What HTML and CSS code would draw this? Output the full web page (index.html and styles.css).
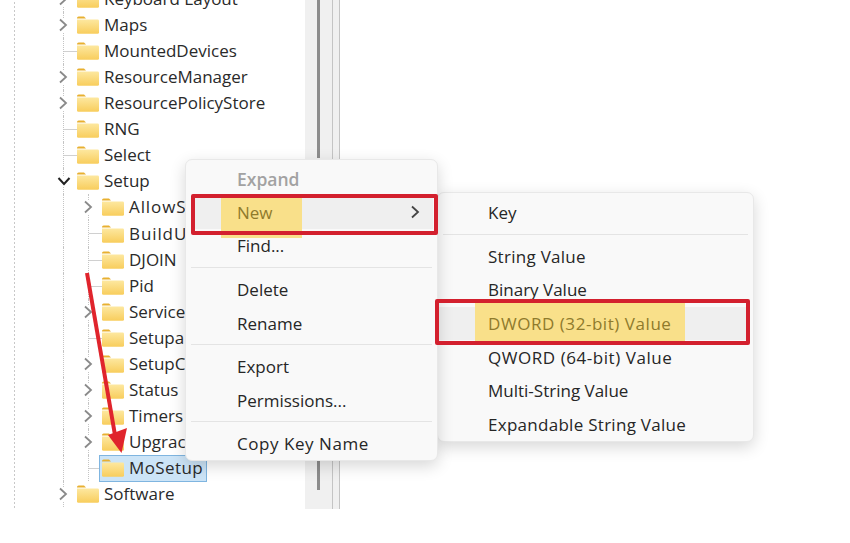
FILE: index.html
```html
<!DOCTYPE html>
<html lang="en">
<head>
    <meta charset="UTF-8">
    <title>Registry Editor context menu</title>
    <link rel="stylesheet" href="styles.css">
</head>
<body>
    <svg width="0" height="0" class="defs">
        <symbol id="folder" viewBox="0 0 22 18">
            <path d="M0 2.2Q0 .6 1.6 .6H7L9 2.6H0Z" fill="#e8b030"/>
            <path d="M0 3.4H20.6Q22 3.4 22 4.8V16.4Q22 17.8 20.6 17.8H1.4Q0 17.8 0 16.4Z" fill="url(#fold)"/>
        </symbol>
        <defs>
            <linearGradient id="fold" x1="0" y1="0" x2="0" y2="1">
                <stop offset="0" stop-color="#fde8a0"/>
                <stop offset="1" stop-color="#f8cd5c"/>
            </linearGradient>
        </defs>
        <symbol id="chev-right" viewBox="0 0 10 14">
            <path d="M2 1.5 8 7 2 12.5" fill="none" stroke="currentColor" stroke-width="1.8"/>
        </symbol>
        <symbol id="chev-down" viewBox="0 0 14 10">
            <path d="M1.5 2 7 8 12.5 2" fill="none" stroke="currentColor" stroke-width="2"/>
        </symbol>
    </svg>

    <div class="panel">
        <div class="tree">
            <div class="row"><svg class="chev"><use href="#chev-right"/></svg><svg class="folder"><use href="#folder"/></svg><span>Keyboard Layout</span></div>
            <div class="row"><svg class="chev"><use href="#chev-right"/></svg><svg class="folder"><use href="#folder"/></svg><span>Maps</span></div>
            <div class="row"><i class="tick"></i><svg class="folder"><use href="#folder"/></svg><span>MountedDevices</span></div>
            <div class="row"><svg class="chev"><use href="#chev-right"/></svg><svg class="folder"><use href="#folder"/></svg><span>ResourceManager</span></div>
            <div class="row"><svg class="chev"><use href="#chev-right"/></svg><svg class="folder"><use href="#folder"/></svg><span>ResourcePolicyStore</span></div>
            <div class="row"><i class="tick"></i><svg class="folder"><use href="#folder"/></svg><span>RNG</span></div>
            <div class="row"><i class="tick"></i><svg class="folder"><use href="#folder"/></svg><span>Select</span></div>
            <div class="row"><svg class="chev-open"><use href="#chev-down"/></svg><svg class="folder"><use href="#folder"/></svg><span>Setup</span></div>
            <div class="row sub"><svg class="chev"><use href="#chev-right"/></svg><svg class="folder"><use href="#folder"/></svg><span class="stretch">AllowS</span></div>
            <div class="row sub"><i class="tick"></i><svg class="folder"><use href="#folder"/></svg><span class="stretch">BuildU</span></div>
            <div class="row sub"><i class="tick"></i><svg class="folder"><use href="#folder"/></svg><span>DJOIN</span></div>
            <div class="row sub"><i class="tick"></i><svg class="folder"><use href="#folder"/></svg><span>Pid</span></div>
            <div class="row sub"><svg class="chev"><use href="#chev-right"/></svg><svg class="folder"><use href="#folder"/></svg><span>Service</span></div>
            <div class="row sub"><i class="tick"></i><svg class="folder"><use href="#folder"/></svg><span>Setupa</span></div>
            <div class="row sub"><svg class="chev"><use href="#chev-right"/></svg><svg class="folder"><use href="#folder"/></svg><span>SetupC</span></div>
            <div class="row sub"><svg class="chev"><use href="#chev-right"/></svg><svg class="folder"><use href="#folder"/></svg><span>Status</span></div>
            <div class="row sub"><svg class="chev"><use href="#chev-right"/></svg><svg class="folder"><use href="#folder"/></svg><span>Timers</span></div>
            <div class="row sub"><svg class="chev"><use href="#chev-right"/></svg><svg class="folder"><use href="#folder"/></svg><span>Upgrac</span></div>
            <div class="row sub"><i class="tick"></i><div class="selected"><svg class="folder"><use href="#folder"/></svg><span>MoSetup</span></div></div>
            <div class="row"><svg class="chev"><use href="#chev-right"/></svg><svg class="folder"><use href="#folder"/></svg><span>Software</span></div>
        </div>
        <div class="scroll-strip">
            <div class="thumb"></div>
            <div class="thumb-low"></div>
        </div>
    </div>

    <svg class="arrow" width="140" height="190" viewBox="0 0 140 190">
        <path d="M87 3 115.5 168" fill="none" stroke="#e0242c" stroke-width="4"/>
        <path d="M108 165 127 158 121.5 183Z" fill="#e0242c"/>
    </svg>

    <div class="menu menu-main">
        <div class="item disabled">Expand</div>
        <div class="item active"><span class="mark mark-new">New</span><svg class="sub-arrow"><use href="#chev-right"/></svg></div>
        <div class="item">Find...</div>
        <div class="sep"></div>
        <div class="item">Delete</div>
        <div class="item">Rename</div>
        <div class="sep"></div>
        <div class="item">Export</div>
        <div class="item">Permissions...</div>
        <div class="sep"></div>
        <div class="item wider">Copy Key Name</div>
    </div>

    <div class="menu menu-new">
        <div class="item">Key</div>
        <div class="sep"></div>
        <div class="item wide">String Value</div>
        <div class="item">Binary Value</div>
        <div class="item active"><span class="mark mark-dword wider">DWORD (32-bit) Value</span></div>
        <div class="item wider">QWORD (64-bit) Value</div>
        <div class="item">Multi-String Value</div>
        <div class="item wide">Expandable String Value</div>
    </div>

    <div class="red-box box-new"></div>
    <div class="red-box box-dword"></div>
</body>
</html>
```

FILE: styles.css
```css
* {
    box-sizing: border-box;
    margin: 0;
    padding: 0;
}

body {
    width: 850px;
    height: 543px;
    background-color: #ffffff;
    color: #2a2a2a;
    font-family: 'Open Sans', sans-serif;
    font-size: 17px;
    overflow: hidden;
    position: relative;
}

.defs {
    position: absolute;
}

.panel {
    display: flex;
    width: 340px;
    height: 509px;
    overflow: hidden;
}

.tree {
    width: 305px;
    margin-top: -14.4px;
    padding-left: 14px;
    background-image:
        repeating-linear-gradient(to bottom, #c8c8c8 0 2px, transparent 2px 4px);
    background-size: 1px 100%;
    background-position: 14px 0;
    background-repeat: no-repeat;
}

.row {
    display: flex;
    align-items: center;
    height: 26.1px;
    padding-left: 47px;
    position: relative;
    white-space: nowrap;
}

.row.sub {
    padding-left: 72px;
}

/* dotted tree guides */
.row::before,
.row.sub::after {
    content: "";
    position: absolute;
    top: 0;
    bottom: 0;
    left: 49px;
    border-left: 1px dotted #c4c4c4;
}

.row.sub::after {
    left: 74px;
}

.row span {
    margin-left: 5px;
    line-height: 26px;
}

.row .stretch {
    letter-spacing: 0.9px;
}

.folder {
    width: 22px;
    height: 18px;
    margin-left: 16px;
    flex-shrink: 0;
}

.chev,
.chev-open,
.tick {
    position: absolute;
    z-index: 1;
}

.chev {
    width: 10px;
    height: 14px;
    left: 44px;
    top: 6px;
    color: #8a8a8a;
    background-color: #ffffff;
}

.chev-open {
    width: 14px;
    height: 10px;
    left: 43px;
    top: 8px;
    color: #222222;
    background-color: #ffffff;
}

.tick {
    left: 50px;
    top: 13px;
    width: 13px;
    height: 1px;
    background-color: #d0d0d0;
}

.sub .chev {
    left: 69px;
}

.sub .tick {
    left: 75px;
}

.selected {
    display: flex;
    align-items: center;
    margin-left: 13px;
    padding: 0 3px 0 2px;
    height: 27px;
    width: 108px;
    background-color: #cce4f7;
    border: 1px solid #7fb5e0;
    letter-spacing: 0.4px;
    position: relative;
    z-index: 1;
}

.selected .folder {
    margin-left: 0;
}

.scroll-strip {
    width: 35px;
    background-color: #f0f0f0;
    border-right: 1px solid #c4c4c4;
    background-image: linear-gradient(#c4c4c4, #c4c4c4);
    background-size: 1px 100%;
    background-position: 27px 0;
    background-repeat: no-repeat;
    position: relative;
}

.thumb,
.thumb-low {
    position: absolute;
    left: 12px;
    width: 3px;
    background-color: #8c8c8c;
}

.thumb {
    top: 0;
    height: 158px;
}

.thumb-low {
    top: 460px;
    height: 30px;
}

.arrow {
    position: absolute;
    left: 0;
    top: 270px;
    z-index: 3;
}

.menu {
    position: absolute;
    background-color: #f9f9f9;
    border: 1px solid #e8e8e8;
    border-radius: 7px;
    box-shadow: 0 5px 16px rgba(0, 0, 0, 0.16);
    color: #262626;
}

.menu-main {
    left: 185px;
    top: 159px;
    width: 253px;
    height: 302px;
    padding-top: 2px;
    z-index: 2;
}

.menu-new {
    left: 437px;
    top: 192px;
    width: 317px;
    height: 250px;
    padding-top: 3px;
    z-index: 1;
}

.item {
    display: flex;
    align-items: center;
    justify-content: space-between;
    height: 33.6px;
    padding-left: 51px;
    padding-right: 17px;
    position: relative;
    white-space: nowrap;
}

.menu-new .item {
    padding-left: 50px;
}

.wide {
    letter-spacing: 0.28px;
}

.wider {
    letter-spacing: 0.55px;
}

.disabled {
    color: #a2a2a2;
    font-weight: 600;
    font-size: 17.5px;
}

.active {
    background-color: #efefef;
    margin: 0 4px 0 5px;
    padding-left: 46px;
    padding-right: 13px;
    color: #8f7a2c;
    z-index: 0;
}

.menu-new .active {
    margin: 0 4px 0 0;
    padding-left: 50px;
}

/* yellow marker pen behind the text */
.mark {
    position: relative;
}

.mark::before {
    content: "";
    position: absolute;
    z-index: -1;
    background-color: #f9e08a;
}

.mark-new::before {
    left: -16px;
    width: 81px;
    top: -4px;
    height: 41px;
}

.mark-dword::before {
    left: -13px;
    width: 210px;
    top: -10px;
    height: 39px;
}

.sub-arrow {
    width: 10px;
    height: 14px;
    color: #444444;
}

.sep {
    height: 10px;
    padding-top: 4px;
    margin: 0 5px;
}

.sep::before {
    content: "";
    display: block;
    height: 1px;
    background-color: #e4e4e4;
}

.red-box {
    position: absolute;
    z-index: 4;
    border: 4px solid #d3202e;
    border-radius: 2px;
}

.box-new {
    left: 191px;
    top: 194px;
    width: 247px;
    height: 41px;
}

.box-dword {
    left: 435px;
    top: 299px;
    width: 315px;
    height: 46px;
}
```
